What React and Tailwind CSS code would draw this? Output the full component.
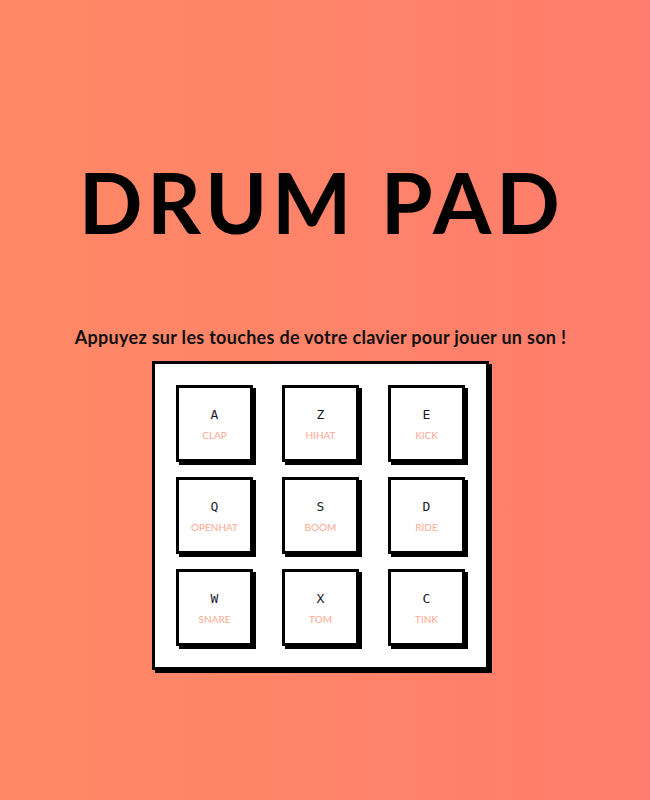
import React from "react";

const pads = [
  ["A", "CLAP"],
  ["Z", "HIHAT"],
  ["E", "KICK"],
  ["Q", "OPENHAT"],
  ["S", "BOOM"],
  ["D", "RIDE"],
  ["W", "SNARE"],
  ["X", "TOM"],
  ["C", "TINK"],
];

export default function App() {
  return (
    <div className="min-h-[800px] w-full pr-[9px] bg-[linear-gradient(to_right,#ff8966,#ff7d6c)] flex flex-col items-center font-['Lato',sans-serif]">
      <h1 className="mt-[160px] pl-[2px] text-[84px] leading-[84px] font-bold tracking-[4.5px] text-black">
        DRUM PAD
      </h1>
      <p className="mt-[82px] text-[18px] leading-[22px] font-bold tracking-[0.3px] text-[#111]">
        Appuyez sur les touches de votre clavier pour jouer un son !
      </p>
      <div className="mt-[13px] border-[3px] border-black bg-white shadow-[3px_3px_0_#000] p-[21px] grid grid-cols-[repeat(3,77px)] gap-x-[29px] gap-y-[15px]">
        {pads.map(([k, l]) => (
          <div
            key={k}
            className="w-[77px] h-[77px] border-[3px] border-black bg-white shadow-[3px_3px_0_#000] flex flex-col items-center justify-center"
          >
            <span className="font-['DejaVu_Sans_Mono',monospace] text-[13px] leading-[16px] text-[#1a1a2a]">
              {k}
            </span>
            <span className="mt-[6px] text-[10px] leading-[12px] text-[#ffa890] uppercase">
              {l}
            </span>
          </div>
        ))}
      </div>
    </div>
  );
}
